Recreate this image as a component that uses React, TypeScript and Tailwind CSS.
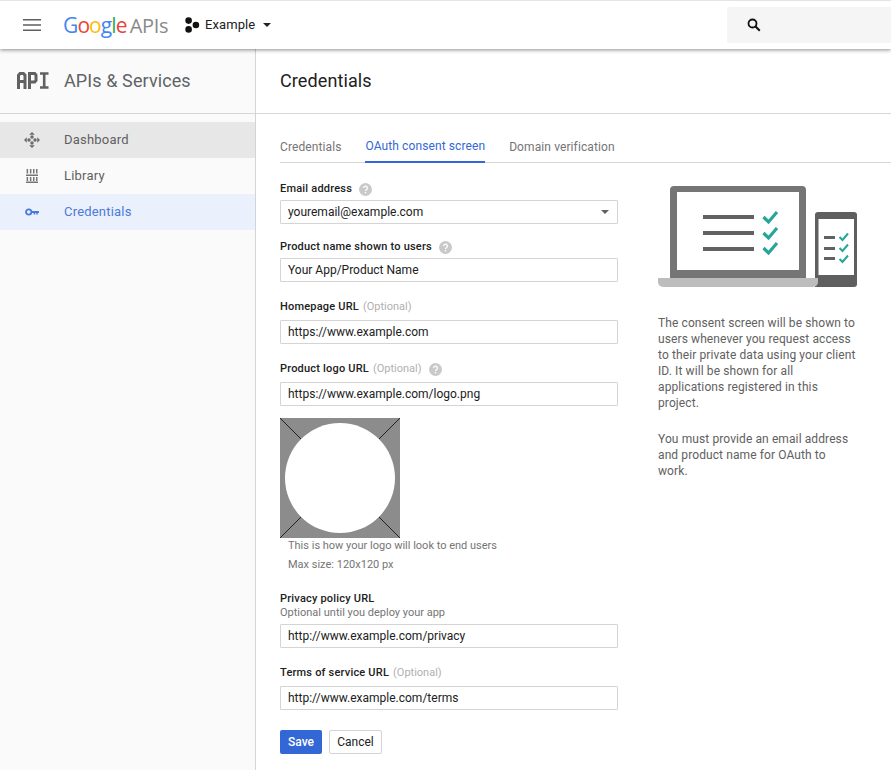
import React from "react";

const Help = () => (
  <svg width="13" height="13" viewBox="0 0 13 13" className="shrink-0">
    <circle cx="6.5" cy="6.5" r="6.5" fill="#c9c9c9" />
    <path d="M4.6 5.1a1.9 1.9 0 1 1 2.9 1.6c-.7.4-1 .7-1 1.4" fill="none" stroke="#fff" strokeWidth="1.3" />
    <rect x="5.8" y="9" width="1.4" height="1.4" fill="#fff" />
  </svg>
);

const Label = ({ text, optional, help, className = "" }: { text: string; optional?: boolean; help?: boolean; className?: string }) => (
  <div className={"flex items-center h-4 text-[11px] " + className}>
    <span className="font-medium text-[#212121] tracking-[0.2px]">{text}</span>
    {optional && <span className="ml-1 text-[#b0b0b0]">(Optional)</span>}
    {help && <span className="ml-[7px]"><Help /></span>}
  </div>
);

const Field = ({ value }: { value: string }) => (
  <div className="h-6 w-[338px] border border-[#d4d4d4] rounded-[1px] bg-white px-[7px] flex items-center text-xs text-[#212121]">
    {value}
  </div>
);

const Nav = ({ icon, text, cls, textCls }: { icon: React.ReactNode; text: string; cls: string; textCls: string }) => (
  <div className={"h-9 flex items-center " + cls}>
    <div className="w-16 flex justify-center pr-[1px]">{icon}</div>
    <span className={"text-[13px] tracking-[0.2px] " + textCls}>{text}</span>
  </div>
);

export default function App() {
  return (
    <div className="w-[891px] h-[770px] overflow-hidden bg-white flex flex-col font-['Roboto',sans-serif]">
      <header className="relative z-10 h-[49px] shrink-0 bg-white border-t border-[#e4e4e4] shadow-[0_1px_4px_rgba(0,0,0,0.45)] flex items-center">
        <svg width="18" height="12" viewBox="0 0 18 12" className="ml-[23px]">
          <path d="M0 0h18v1.6H0zM0 5.2h18v1.6H0zM0 10.4h18V12H0z" fill="#5f5f5f" />
        </svg>
        <div className="ml-[22px] w-[105px] flex items-baseline text-[21px] font-['Open_Sans',sans-serif] tracking-[-0.9px] leading-none">
          <span className="text-[#4285f4]">G</span>
          <span className="text-[#ea4335]">o</span>
          <span className="text-[#fbbc05]">o</span>
          <span className="text-[#4285f4]">g</span>
          <span className="text-[#34a853]">l</span>
          <span className="text-[#ea4335]">e</span>
          <span className="ml-[3px] text-[#8a8a8a] tracking-[-0.3px] text-[20px]">APIs</span>
        </div>
        <svg width="15" height="16" viewBox="0 0 15 16" className="ml-[17px]">
          <circle cx="3.6" cy="3.6" r="3.3" fill="#111" />
          <circle cx="3.6" cy="12.4" r="3.3" fill="#111" />
          <circle cx="10.9" cy="8" r="3.3" fill="#111" />
        </svg>
        <span className="ml-[5px] text-[13px] text-[#212121] tracking-[0.1px]">Example</span>
        <span className="ml-[8px] w-0 h-0 border-l-[4px] border-r-[4px] border-t-[4px] border-l-transparent border-r-transparent border-t-[#212121]" />
        <div className="ml-auto w-[164px] h-9 bg-[#f5f5f5] rounded-l-[2px] flex items-center pl-[20px]">
          <svg width="14" height="14" viewBox="0 0 14 14">
            <circle cx="5.5" cy="5.5" r="4" fill="none" stroke="#111" strokeWidth="1.8" />
            <path d="M8.5 8.5l4.3 4.3" stroke="#111" strokeWidth="2" />
          </svg>
        </div>
      </header>

      <div className="flex flex-1 min-h-0">
        <aside className="w-[256px] shrink-0 bg-[#fafafa] border-r border-[#d4d4d4]">
          <div className="h-[65px] border-b border-[#d6d6d6] flex items-center pb-[1px]">
            <svg width="32" height="17" viewBox="0 0 32 17" className="ml-[17px]" fill="none" stroke="#616161" strokeWidth="3">
              <path d="M1.500 17V3.200L3 1.500h3.400L8 3.200V17M1.500 9.500H8" />
              <path d="M12.500 17V1.500h5.200l1.300 1.500v5.500l-1.300 1.500h-5.200" />
              <path d="M23 1.500h8.500M23 15.500h8.500M27.200 1.500v14" strokeWidth="2.6" />
            </svg>
            <span className="ml-[15px] text-[18px] text-[#5f6368] tracking-[0.1px]">APIs &amp; Services</span>
          </div>
          <div className="pt-2">
            <Nav
              cls="bg-[#e7e7e7]"
              textCls="text-[#5f5f5f]"
              text="Dashboard"
              icon={
                <svg width="16" height="16" viewBox="0 0 16 16" fill="#6b6b6b">
                  <path d="M8 0l2.800 2.800H5.200zM8 16l-2.800-2.800h5.600zM0 8l2.800-2.800v5.600zM16 8l-2.800 2.800V5.200z" />
                  <circle cx="8" cy="5" r="1.700" />
                  <circle cx="8" cy="11" r="1.700" />
                  <circle cx="5" cy="8" r="1.700" />
                  <circle cx="11" cy="8" r="1.700" />
                </svg>
              }
            />
            <Nav
              cls=""
              textCls="text-[#5f5f5f]"
              text="Library"
              icon={
                <svg width="12" height="14" viewBox="0 0 12 14" fill="#757575">
                  <path d="M0 5.500h12v1.400H0zM0 12.600h12V14H0z" />
                  <path d="M.6 0h1.500v4.600H.6zM3.900 0h1.500v4.600H3.900zM7 0h1.500v4.600H7zM10 0h1.500v4.600H10zM.6 8h1.500v4H.6zM3.900 8h1.500v4H3.900zM7 8h1.500v4H7zM10 8h1.500v4H10z" />
                </svg>
              }
            />
            <Nav
              cls="bg-[#eaf0fc]"
              textCls="text-[#4a7bd8]"
              text="Credentials"
              icon={
                <svg width="14" height="8" viewBox="0 0 14 8">
                  <circle cx="3.700" cy="4" r="2.700" fill="none" stroke="#4a7bd8" strokeWidth="1.800" />
                  <path d="M6 3h8v2h-1.200v1.600h-1.600V5h-1v1.600H8.600V5H6z" fill="#4a7bd8" />
                </svg>
              }
            />
          </div>
        </aside>

        <main className="flex-1 min-w-0">
          <div className="h-[65px] border-b border-[#d6d6d6] flex items-center pl-6 pb-[1px] text-[18px] text-[#212121] tracking-[0.1px]">
            Credentials
          </div>
          <div className="pl-6">
            <div className="mt-[16px] h-[33px] flex gap-6 border-b border-[#d6d6d6] text-xs tracking-[0.1px]">
              <div className="h-[33px] flex items-center text-[#757575]">Credentials</div>
              <div className="h-[33px] flex items-center text-[#3367d6] border-b-2 border-[#3367d6] pt-[1px]">OAuth consent screen</div>
              <div className="h-[33px] flex items-center text-[#757575]">Domain verification</div>
            </div>
            <div className="flex mt-[18px]">
              <form className="w-[338px] shrink-0 flex flex-col">
                <Label text="Email address" help />
                <div className="mt-[3px] h-6 w-[338px] border border-[#d4d4d4] rounded-[1px] bg-white pl-[7px] pr-2 flex items-center justify-between text-xs text-[#212121]">
                  youremail@example.com
                  <span className="w-0 h-0 border-l-[4px] border-r-[4px] border-t-[4px] border-l-transparent border-r-transparent border-t-[#616161]" />
                </div>
                <Label className="mt-[15px] mb-[3px]" text="Product name shown to users" help />
                <Field value="Your App/Product Name" />
                <Label className="mt-[17px] mb-[5px]" text="Homepage URL" optional />
                <Field value="https://www.example.com" />
                <Label className="mt-[17px] mb-[5px]" text="Product logo URL" optional help />
                <Field value="https://www.example.com/logo.png" />
                <svg width="120" height="120" viewBox="0 0 120 120" className="mt-3 shrink-0">
                  <rect width="120" height="120" fill="#8c8c8c" />
                  <path d="M0 0l120 120M120 0L0 120" stroke="#222" strokeWidth="1" />
                  <circle cx="60" cy="60" r="55" fill="#fff" />
                </svg>
                <div className="pl-2 mt-[1px] text-[11px] leading-[14px] text-[#757575]">
                  <div>This is how your logo will look to end users</div>
                  <div className="mt-[5px]">Max size: 120x120 px</div>
                </div>
                <Label className="mt-[19px]" text="Privacy policy URL" />
                <div className="h-[12px] mb-[5px] flex items-center text-[11px] text-[#757575]">Optional until you deploy your app</div>
                <Field value="http://www.example.com/privacy" />
                <Label className="mt-[17px] mb-[5px]" text="Terms of service URL" optional />
                <Field value="http://www.example.com/terms" />
                <div className="mt-5 flex gap-[7px]">
                  <div className="w-[42px] h-6 rounded-[2px] bg-[#3367d6] text-white text-xs font-medium flex items-center justify-center">Save</div>
                  <div className="w-[53px] h-6 rounded-[2px] bg-white border border-[#d4d4d4] text-[#212121] text-xs flex items-center justify-center">Cancel</div>
                </div>
              </form>

              <div className="ml-10 w-[199px] shrink-0 pt-[5px]">
                <svg width="200" height="102" viewBox="0 0 200 102" className="block">
                  <path d="M157 29a3 3 0 0 1 3-3h36a3 3 0 0 1 3 3v69a3 3 0 0 1-3 3h-39z" fill="#5f5f5f" />
                  <rect x="160.500" y="33" width="35.500" height="56" fill="#fff" />
                  <path d="M12 4a4 4 0 0 1 4-4h128a4 4 0 0 1 4 4v88H12z" fill="#757575" />
                  <rect x="19" y="6" width="122" height="78" fill="#fff" />
                  <path d="M0 92h160v4a5 5 0 0 1-5 5H5a5 5 0 0 1-5-5z" fill="#bdbdbd" />
                  <g fill="#616161">
                    <rect x="45" y="29" width="51" height="4" />
                    <rect x="45" y="45" width="51" height="4" />
                    <rect x="45" y="61" width="51" height="4" />
                    <rect x="166" y="50" width="11" height="3" />
                    <rect x="166" y="61" width="11" height="3" />
                    <rect x="166" y="71" width="11" height="3" />
                  </g>
                  <g fill="none" stroke="#26a69a" strokeWidth="3.200">
                    <path d="M105.500 31l5 5 8.500-10M105.500 47l5 5 8.500-10M105.500 62l5 5 8.500-10" />
                    <path strokeWidth="2" d="M181.500 51l3 3 5.500-6.500M181.500 62l3 3 5.500-6.500M181.500 73l3 3 5.500-6.500" />
                  </g>
                </svg>
                <div className="mt-[27px] text-xs leading-4 tracking-[0.1px] text-[#616161]">
                  <p>The consent screen will be shown to users whenever you request access to their private data using your client ID. It will be shown for all applications registered in this project.</p>
                  <p className="mt-5">You must provide an email address and product name for OAuth to work.</p>
                </div>
              </div>
            </div>
          </div>
        </main>
      </div>
    </div>
  );
}
